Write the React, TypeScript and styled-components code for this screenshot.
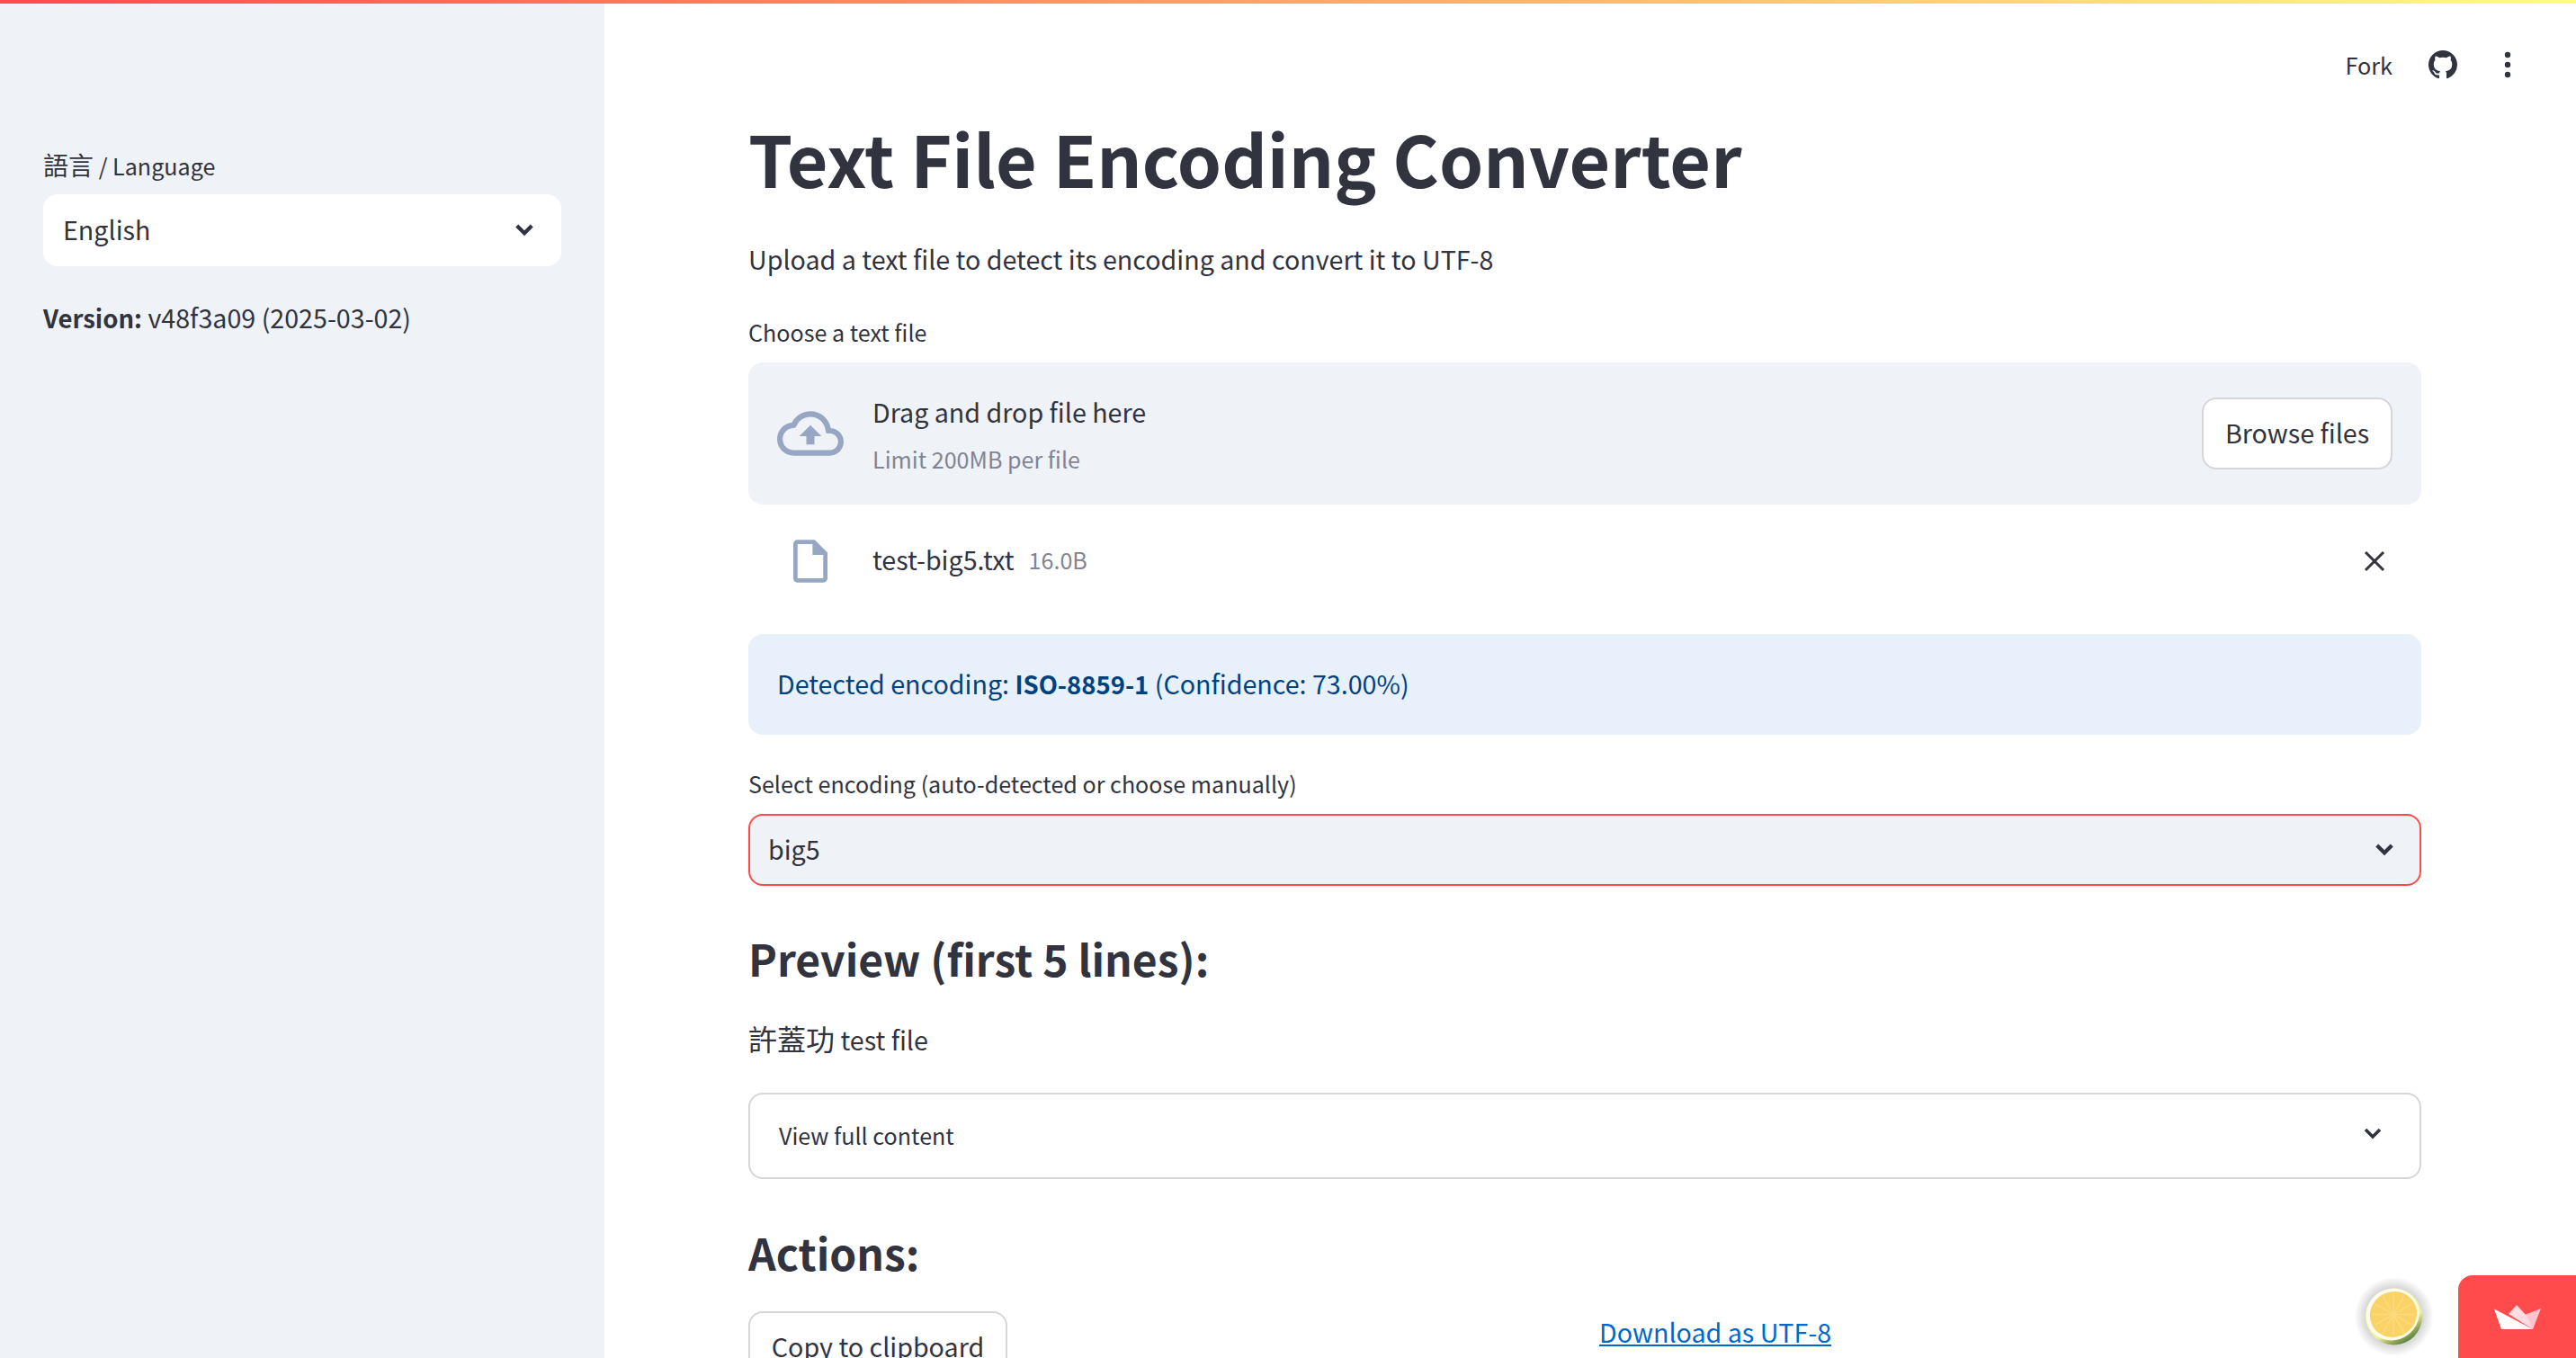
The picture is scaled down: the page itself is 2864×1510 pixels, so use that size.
import styled, { createGlobalStyle } from 'styled-components';

const GlobalStyle = createGlobalStyle`
  html, body {
    margin: 0;
    padding: 0;
    height: 100%;
    overflow: hidden;
    background: #fff;
  }
  body {
    font-family: 'Noto Sans CJK TC', 'Noto Sans', sans-serif;
    color: #31333f;
  }
  * {
    box-sizing: border-box;
  }
`;

const Page = styled.div`
  position: relative;
  width: 2864px;
  height: 1510px;
  overflow: hidden;
`;
const TopBar = styled.div`
  height: 4px;
  background: linear-gradient(90deg, #ff4b4b, #fffd80);
`;
const Columns = styled.div`
  display: flex;
  height: 1506px;
`;
const Sidebar = styled.aside`
  flex: 0 0 672px;
  padding: 160px 48px 0;
  background: #eff2f7;
`;
const Main = styled.main`
  flex: 1;
  padding: 0 172px 0 160px;
`;
const Toolbar = styled.div`
  display: flex;
  align-items: center;
  justify-content: flex-end;
  height: 136px;
  margin-right: -172px;
  padding: 0 68px 0 0;
  margin-bottom: -23px;
`;
const ToolbarText = styled.span`
  font-size: 25.2px;
  line-height: 40px;
  margin-right: 40px;
`;
const DotsButton = styled.span`
  display: flex;
  margin-left: 48px;
`;
const Cjk = styled.span`
  font-size: 1.117em;
`;
const Strong = styled.b`
  font-size: 0.96em;
`;
const Label = styled.div`
  font-size: 25.1px;
  line-height: 37px;
  height: 40px;
  margin-bottom: 12px;
`;
const Select = styled.div<{ $focused?: boolean }>`
  display: flex;
  align-items: center;
  justify-content: space-between;
  height: 80px;
  padding: 0 24px 3px 20px;
  font-size: 28.65px;
  border-radius: 16px;
  background: ${(p) => (p.$focused ? '#eff2f7' : '#fff')};
  border: 2px solid ${(p) => (p.$focused ? '#ff4b4b' : 'transparent')};
`;
const VersionLine = styled.p`
  margin: 33px 0 0;
  font-size: 28.65px;
  line-height: 48px;
`;
const Title = styled.h1`
  margin: 0 0 32px;
  font-size: 78.8px;
  line-height: 116px;
  font-weight: 700;
`;
const BodyText = styled.p`
  margin: 0 0 38px;
  height: 48px;
  font-size: 28.65px;
  line-height: 45px;
`;
const Dropzone = styled.div`
  display: flex;
  align-items: center;
  height: 158px;
  padding: 0 32px;
  border-radius: 16px;
  background: #eff2f7;
`;
const DropText = styled.div`
  flex: 1;
  margin-left: 32px;
`;
const DropTitle = styled.div`
  font-size: 28.65px;
  line-height: 48px;
  margin-bottom: 8px;
`;
const DropLimit = styled.div`
  font-size: 25.1px;
  line-height: 40px;
  color: #808495;
`;
const Button = styled.div<{ $width: number }>`
  display: flex;
  align-items: center;
  justify-content: center;
  width: ${(p) => p.$width}px;
  height: 80px;
  padding-bottom: 4px;
  font-size: 28.65px;
  background: #fff;
  border: 2px solid #d5d6da;
  border-radius: 16px;
`;
const FileRow = styled.div`
  display: flex;
  align-items: center;
  height: 80px;
  margin-top: 23px;
  padding: 0 40px 0 32px;
`;
const FileIconBox = styled.span`
  display: flex;
  justify-content: center;
  width: 74px;
`;
const FileName = styled.span`
  margin: 0 0 6px 32px;
  font-size: 28.65px;
`;
const FileSize = styled.span`
  flex: 1;
  margin: 0 0 4px 16px;
  font-size: 25.1px;
  color: #808495;
`;
const InfoBox = styled.div`
  display: flex;
  align-items: center;
  height: 112px;
  margin: 41px 0 36px;
  padding: 0 32px 3px;
  font-size: 28.65px;
  border-radius: 16px;
  color: #004280;
  background: #e8f0fb;
`;
const SectionTitle = styled.h2<{ $top?: number }>`
  margin: ${(p) => p.$top ?? 0}px 0 0;
  font-size: 48px;
  line-height: 80px;
  font-weight: 700;
`;
const PreviewText = styled.p`
  margin: 26px 0 36px;
  height: 48px;
  font-size: 28.65px;
  line-height: 46px;
`;
const Expander = styled.div`
  display: flex;
  align-items: center;
  justify-content: space-between;
  height: 96px;
  margin-bottom: 41px;
  padding: 0 36px 2px 32px;
  font-size: 25.1px;
  border: 2px solid #d5d6da;
  border-radius: 16px;
`;
const ExpanderIcon = styled.svg`
  margin-bottom: 4px;
`;
const ActionsRow = styled.div`
  display: grid;
  grid-template-columns: 946px 1fr;
  margin-top: 26px;
`;
const DownloadLink = styled.a`
  align-self: start;
  font-size: 28.65px;
  line-height: 46px;
  color: #0068c9;
  text-decoration: underline;
`;
const Lemon = styled.svg`
  position: absolute;
  left: 2616px;
  top: 1418px;
`;
const AppBadge = styled.div`
  position: absolute;
  right: 0;
  bottom: 0;
  display: flex;
  align-items: center;
  justify-content: center;
  width: 131px;
  height: 92px;
  background: #ff4b4b;
  border-top-left-radius: 16px;
`;

function Chevron() {
  return (
    <svg width="30" height="30" viewBox="0 0 24 24" fill="#31333f">
      <path d="M6.6 7.6 12 13l5.4-5.4L19.8 10 12 17.8 4.2 10z" />
    </svg>
  );
}

const lemonRays = [0, 30, 60, 90, 120, 150, 180, 210, 240, 270, 300, 330];

function App() {
  return (
    <Page>
      <GlobalStyle />
      <TopBar />
      <Columns>
        <Sidebar>
          <Label>
            <Cjk>語言</Cjk> / Language
          </Label>
          <Select>
            <span>English</span>
            <Chevron />
          </Select>
          <VersionLine>
            <Strong>Version:</Strong> v48f3a09 (2025-03-02)
          </VersionLine>
        </Sidebar>
        <Main>
          <Toolbar>
            <ToolbarText>Fork</ToolbarText>
            <svg width="32" height="32" viewBox="0 0 16 16" fill="#31333f">
              <path d="M8 0C3.58 0 0 3.58 0 8c0 3.54 2.29 6.53 5.47 7.59.4.07.55-.17.55-.38 0-.19-.01-.82-.01-1.49-2.01.37-2.53-.49-2.69-.94-.09-.23-.48-.94-.82-1.13-.28-.15-.68-.52-.01-.53.63-.01 1.08.58 1.23.82.72 1.21 1.87.87 2.33.66.07-.52.28-.87.51-1.07-1.78-.2-3.64-.89-3.64-3.95 0-.87.31-1.59.82-2.15-.08-.2-.36-1.02.08-2.12 0 0 .67-.21 2.2.82.64-.18 1.32-.27 2-.27.68 0 1.36.09 2 .27 1.53-1.04 2.2-.82 2.2-.82.44 1.1.16 1.92.08 2.12.51.56.82 1.27.82 2.15 0 3.07-1.87 3.75-3.65 3.95.29.25.54.73.54 1.48 0 1.07-.01 1.93-.01 2.2 0 .21.15.46.55.38A8.013 8.013 0 0016 8c0-4.42-3.58-8-8-8z" />
            </svg>
            <DotsButton>
              <svg width="16" height="32" viewBox="0 0 16 32" fill="#31333f">
                <circle cx="8" cy="5" r="3.2" />
                <circle cx="8" cy="16" r="3.2" />
                <circle cx="8" cy="27" r="3.2" />
              </svg>
            </DotsButton>
          </Toolbar>
          <Title>Text File Encoding Converter</Title>
          <BodyText>Upload a text file to detect its encoding and convert it to UTF-8</BodyText>
          <Label>Choose a text file</Label>
          <Dropzone>
            <svg width="74" height="74" viewBox="0 0 24 24" fill="#97a6c3">
              <path d="M19.35 10.04C18.67 6.59 15.64 4 12 4 9.11 4 6.6 5.64 5.35 8.04 2.34 8.36 0 10.91 0 14c0 3.31 2.69 6 6 6h13c2.76 0 5-2.24 5-5 0-2.64-2.05-4.78-4.65-4.96zM19 18H6c-2.21 0-4-1.79-4-4 0-2.05 1.53-3.76 3.56-3.97l1.07-.11.5-.95C8.08 7.14 9.94 6 12 6c2.62 0 4.88 1.86 5.39 4.43l.3 1.5 1.53.11c1.56.1 2.78 1.41 2.78 2.96 0 1.65-1.35 3-3 3zM8 13h2.55v3h2.9v-3H16l-4-4z" />
            </svg>
            <DropText>
              <DropTitle>Drag and drop file here</DropTitle>
              <DropLimit>Limit 200MB per file</DropLimit>
            </DropText>
            <Button $width={212}>Browse files</Button>
          </Dropzone>
          <FileRow>
            <FileIconBox>
              <svg width="38" height="48" viewBox="0 0 16 20" fill="#97a6c3">
                <path d="M2 0h8l6 6v12c0 1.1-.9 2-2 2H2c-1.1 0-2-.9-2-2V2C0 .9.9 0 2 0zm0 2v16h12V7H9V2H2z" fillRule="evenodd" />
              </svg>
            </FileIconBox>
            <FileName>test-big5.txt</FileName>
            <FileSize>16.0B</FileSize>
            <svg width="24" height="24" viewBox="0 0 24 24" stroke="#31333f" strokeWidth="3">
              <path d="M2 2 22 22M22 2 2 22" />
            </svg>
          </FileRow>
          <InfoBox>
            <span>
              Detected encoding: <Strong>ISO-8859-1</Strong> (Confidence: 73.00%)
            </span>
          </InfoBox>
          <Label>Select encoding (auto-detected or choose manually)</Label>
          <Select $focused>
            <span>big5</span>
            <Chevron />
          </Select>
          <SectionTitle $top={40}>Preview (first 5 lines):</SectionTitle>
          <PreviewText>
            <Cjk>許蓋功</Cjk> test file
          </PreviewText>
          <Expander>
            <span>View full content</span>
            <ExpanderIcon width="32" height="32" viewBox="0 0 32 32" fill="none" stroke="#31333f" strokeWidth="3.6">
              <path d="M8 12 16 20 24 12" />
            </ExpanderIcon>
          </Expander>
          <SectionTitle>Actions:</SectionTitle>
          <ActionsRow>
            <Button $width={288}>Copy to clipboard</Button>
            <DownloadLink href="#">Download as UTF-8</DownloadLink>
          </ActionsRow>
        </Main>
      </Columns>
      <Lemon width="90" height="90" viewBox="0 0 90 90">
        <defs>
          <radialGradient id="shadow">
            <stop offset="65%" stopColor="#000" stopOpacity="0.2" />
            <stop offset="100%" stopColor="#000" stopOpacity="0" />
          </radialGradient>
          <linearGradient id="rind" x1="0.25" y1="0.25" x2="0.7" y2="1">
            <stop offset="60%" stopColor="#eef0a0" />
            <stop offset="82%" stopColor="#98a858" />
            <stop offset="100%" stopColor="#4a7a3c" />
          </linearGradient>
        </defs>
        <circle cx="45.5" cy="46" r="44" fill="url(#shadow)" />
        <circle cx="45.5" cy="46" r="31.5" fill="url(#rind)" />
        <ellipse cx="44" cy="43.5" rx="30" ry="28.5" fill="#fdfdea" transform="rotate(-30 44 43.5)" />
        <ellipse cx="45" cy="43.5" rx="26.5" ry="25" fill="#fbd266" transform="rotate(-30 45 43.5)" />
        {lemonRays.map((deg) => (
          <line
            key={deg}
            x1="45"
            y1="43.5"
            x2="45"
            y2="20"
            stroke="#fcdc85"
            strokeWidth="1.2"
            transform={`rotate(${deg} 45 43.5)`}
          />
        ))}
      </Lemon>
      <AppBadge>
        <svg width="52" height="27" viewBox="0 0 52 27">
          <path d="M34 11 52 4 43 27z" fill="#ffc4ce" />
          <path d="M16 10 25 0 36 12 43 27z" fill="#ffdbe2" />
          <path d="M0 4.5 43 27H8z" fill="#fffdfb" />
        </svg>
      </AppBadge>
    </Page>
  );
}

export default App;
